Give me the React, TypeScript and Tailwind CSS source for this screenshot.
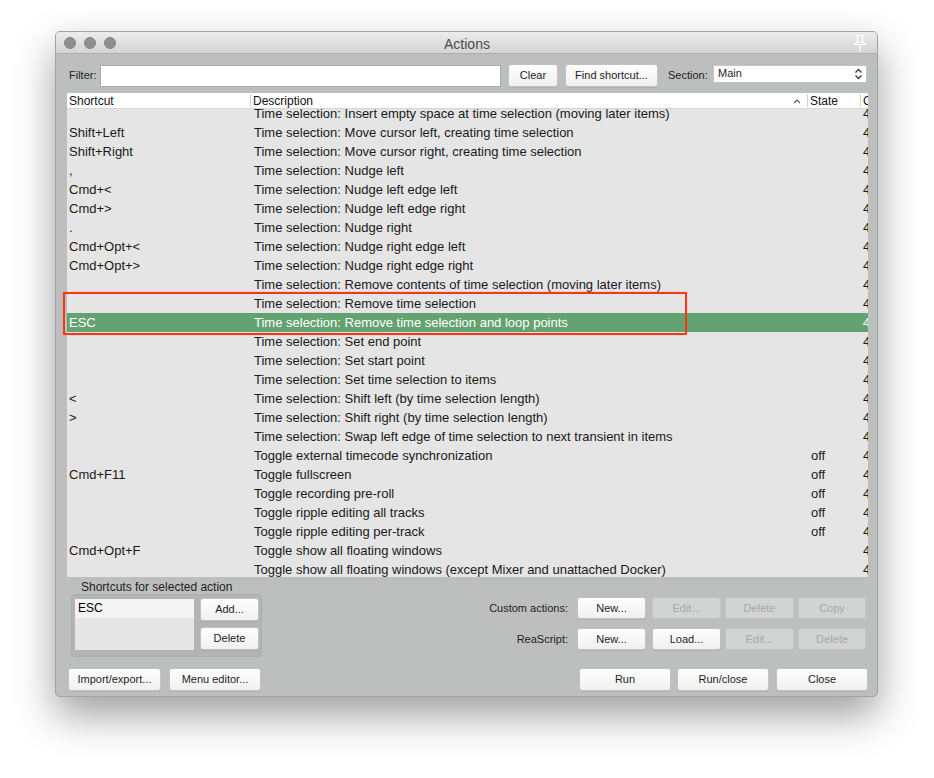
import React from "react"

type Row = {
  key: string
  desc: string
  state?: string
  selected?: boolean
}

const rows: Row[] = [
  { key: "", desc: "Time selection: Insert empty space at time selection (moving later items)" },
  { key: "Shift+Left", desc: "Time selection: Move cursor left, creating time selection" },
  { key: "Shift+Right", desc: "Time selection: Move cursor right, creating time selection" },
  { key: ",", desc: "Time selection: Nudge left" },
  { key: "Cmd+<", desc: "Time selection: Nudge left edge left" },
  { key: "Cmd+>", desc: "Time selection: Nudge left edge right" },
  { key: ".", desc: "Time selection: Nudge right" },
  { key: "Cmd+Opt+<", desc: "Time selection: Nudge right edge left" },
  { key: "Cmd+Opt+>", desc: "Time selection: Nudge right edge right" },
  { key: "", desc: "Time selection: Remove contents of time selection (moving later items)" },
  { key: "", desc: "Time selection: Remove time selection" },
  { key: "ESC", desc: "Time selection: Remove time selection and loop points", selected: true },
  { key: "", desc: "Time selection: Set end point" },
  { key: "", desc: "Time selection: Set start point" },
  { key: "", desc: "Time selection: Set time selection to items" },
  { key: "<", desc: "Time selection: Shift left (by time selection length)" },
  { key: ">", desc: "Time selection: Shift right (by time selection length)" },
  { key: "", desc: "Time selection: Swap left edge of time selection to next transient in items" },
  { key: "", desc: "Toggle external timecode synchronization", state: "off" },
  { key: "Cmd+F11", desc: "Toggle fullscreen", state: "off" },
  { key: "", desc: "Toggle recording pre-roll", state: "off" },
  { key: "", desc: "Toggle ripple editing all tracks", state: "off" },
  { key: "", desc: "Toggle ripple editing per-track", state: "off" },
  { key: "Cmd+Opt+F", desc: "Toggle show all floating windows" },
  { key: "", desc: "Toggle show all floating windows (except Mixer and unattached Docker)" },
]

const Btn = ({
  label,
  w,
  disabled,
  h = "h-[23px]",
  className = "",
}: {
  label: string
  w: string
  disabled?: boolean
  h?: string
  className?: string
}) => (
  <button
    className={`${w} ${h} ${className} block shrink-0 rounded-[3px] border text-[11px] leading-none ${
      disabled
        ? "border-[#c4c6c6] bg-[#d2d4d4] text-[#a6a8a8]"
        : "border-[#c2c2c2] bg-gradient-to-b from-[#fefefe] to-[#f0f0f0] text-[#1e1e1e] shadow-[0_1px_0_rgba(0,0,0,0.06)]"
    }`}
  >
    {label}
  </button>
)

const PinIcon = () => (
  <svg width="16" height="18" viewBox="0 0 16 18" fill="none" stroke="#ffffff" strokeWidth="1.2">
    <path d="M4 1.5h8M5.5 1.5v6.5M10.5 1.5v6.5M2.5 10.5h11L10.5 8h-5z" strokeLinejoin="round" />
    <path d="M8 10.5v6.5" />
  </svg>
)

const SelectArrows = () => (
  <svg width="9" height="12" viewBox="0 0 9 12" fill="none" stroke="#3a3a3a" strokeWidth="1.3">
    <path d="M1.5 4.5 4.5 1.5 7.5 4.5M1.5 7.5 4.5 10.5 7.5 7.5" />
  </svg>
)

export default function App() {
  return (
    <div className="relative w-[934px] h-[778px] bg-white pt-[31px] pl-[55px] font-['Liberation_Sans',Arial,sans-serif]">
      {/* window */}
      <div className="w-[823px] h-[666px] flex flex-col rounded-[5px] border border-[#a3a3a3] bg-[#bdbfbf] overflow-hidden shadow-[0_18px_40px_rgba(0,0,0,0.38)]">
        {/* title bar */}
        <div className="relative h-[22px] shrink-0 flex items-center border-b border-[#adafaf] bg-gradient-to-b from-[#ececec] to-[#d4d4d4]">
          <div className="flex gap-[8px] pl-[8px]">
            <span className="w-[12px] h-[12px] rounded-full bg-[#8f9090] border border-[#858686]" />
            <span className="w-[12px] h-[12px] rounded-full bg-[#8f9090] border border-[#858686]" />
            <span className="w-[12px] h-[12px] rounded-full bg-[#8f9090] border border-[#858686]" />
          </div>
          <div className="flex-1 text-center text-[14px] leading-[22px] pt-[2px] text-[#4a4a4a] pr-[34px]">Actions</div>
          <div className="pr-[9px] pt-[1px]">
            <PinIcon />
          </div>
        </div>

        <div className="flex-1 flex flex-col pl-[11px] pr-[9px]">
          {/* filter row */}
          <div className="mt-[10px] h-[23px] flex items-center">
            <span className="ml-[2px] w-[31px] text-[11px] text-[#222]">Filter:</span>
            <div className="w-[401px] h-[22px] bg-white border border-[#a9abab]" />
            <Btn label="Clear" w="w-[50px]" className="ml-[7px]" />
            <Btn label="Find shortcut..." w="w-[93px]" className="ml-[7px]" />
            <span className="ml-[10px] w-[45px] text-[11px] text-[#222]">Section:</span>
            <div className="w-[154px] h-[18px] self-start mt-[1px] bg-white border border-[#c4c4c4] flex items-start justify-between pl-[4px] pr-[3px]">
              <span className="text-[11px] leading-[14px] text-[#1e1e1e]">Main</span>
              <span className="self-center">
                <SelectArrows />
              </span>
            </div>
          </div>

          {/* action list */}
          <div className="mt-[6px] w-[801px] h-[484px] bg-[#e4e5e4] flex flex-col overflow-hidden">
            <div className="h-[16px] shrink-0 bg-white border-b border-[#d5d6d6] flex items-center text-[12px] text-[#111] relative z-10 whitespace-nowrap">
              <div className="w-[183px] shrink-0 pl-[2px]">Shortcut</div>
              <div className="w-px shrink-0 h-[13px] bg-[#cfd0d0]" />
              <div className="w-[556px] shrink-0 pl-[2px] flex items-center justify-between pr-[6px]">
                <span>Description</span>
                <svg width="8" height="6" viewBox="0 0 8 6" fill="none" stroke="#555" strokeWidth="1.1">
                  <path d="M1 5 4 2 7 5" />
                </svg>
              </div>
              <div className="w-px shrink-0 h-[13px] bg-[#cfd0d0]" />
              <div className="w-[52px] shrink-0 pl-[2px]">State</div>
              <div className="w-px shrink-0 h-[13px] bg-[#cfd0d0]" />
              <div className="shrink-0 pl-[2px]">C</div>
            </div>
            <div className="mt-[-5px]">
              {rows.map((r, i) => (
                <div
                  key={i}
                  className={`h-[19px] flex items-center text-[13px] whitespace-nowrap ${
                    r.selected ? "bg-[#64a371] text-white" : "text-[#1a1a1a]"
                  }`}
                >
                  <div className="w-[186px] shrink-0 pl-[2px] overflow-hidden">{r.key}</div>
                  <div className="w-[557px] shrink-0 pl-[1px] overflow-hidden">{r.desc}</div>
                  <div className="w-[52px] shrink-0 pl-[1px]">{r.state ?? ""}</div>
                  <div className="w-[6px] shrink-0 overflow-hidden pl-[1px]">4</div>
                </div>
              ))}
            </div>
          </div>

          {/* lower controls */}
          <div className="flex">
            <div className="flex flex-col">
              <div className="pl-[14px] h-[17px] flex items-end text-[12px] text-[#1e1e1e] leading-[14px]">
                Shortcuts for selected action
              </div>
              <div className="ml-[4px] w-[191px] h-[63px] rounded-[4px] bg-[#b3b5b5] border border-[#acaeae] flex pl-[3px] pt-[4px]">
                <div className="w-[119px] h-[51px] bg-[#e5e6e5]">
                  <div className="h-[19px] bg-[#f4f4f4] pl-[3px] text-[12px] leading-[19px] text-black">ESC</div>
                </div>
                <div className="ml-[6px] -mt-[1px] flex flex-col gap-[6px]">
                  <Btn label="Add..." w="w-[59px]" />
                  <Btn label="Delete" w="w-[59px]" />
                </div>
              </div>
            </div>

            <div className="ml-auto mr-[2px] pt-[20px] flex flex-col gap-[9px]">
              <div className="flex items-center">
                <span className="w-[112px] pr-[9px] text-right text-[11px] text-[#222]">Custom actions:</span>
                <Btn label="New..." w="w-[69px]" h="h-[22px]" />
                <Btn label="Edit..." w="w-[69px]" h="h-[22px]" disabled className="ml-[6px]" />
                <Btn label="Delete" w="w-[69px]" h="h-[22px]" disabled className="ml-[4px]" />
                <Btn label="Copy" w="w-[68px]" h="h-[22px]" disabled className="ml-[4px]" />
              </div>
              <div className="flex items-center">
                <span className="w-[112px] pr-[9px] text-right text-[11px] text-[#222]">ReaScript:</span>
                <Btn label="New..." w="w-[69px]" h="h-[22px]" />
                <Btn label="Load..." w="w-[69px]" h="h-[22px]" className="ml-[6px]" />
                <Btn label="Edit..." w="w-[69px]" h="h-[22px]" disabled className="ml-[4px]" />
                <Btn label="Delete" w="w-[68px]" h="h-[22px]" disabled className="ml-[4px]" />
              </div>
            </div>
          </div>

          {/* bottom buttons */}
          <div className="mt-[11px] flex">
            <Btn label="Import/export..." w="w-[93px]" className="ml-[1px]" />
            <Btn label="Menu editor..." w="w-[92px]" className="ml-[8px]" />
            <Btn label="Run" w="w-[92px]" className="ml-auto" />
            <Btn label="Run/close" w="w-[92px]" className="ml-[6px]" />
            <Btn label="Close" w="w-[92px]" className="ml-[7px]" />
          </div>
        </div>
      </div>

      {/* highlight around the selected action */}
      <div className="absolute left-[63px] top-[292px] w-[624px] h-[43px] border-[2.5px] border-[#fa3618] rounded-[1px] shadow-[0_0_1px_rgba(250,54,24,0.8)] pointer-events-none" />
    </div>
  )
}
